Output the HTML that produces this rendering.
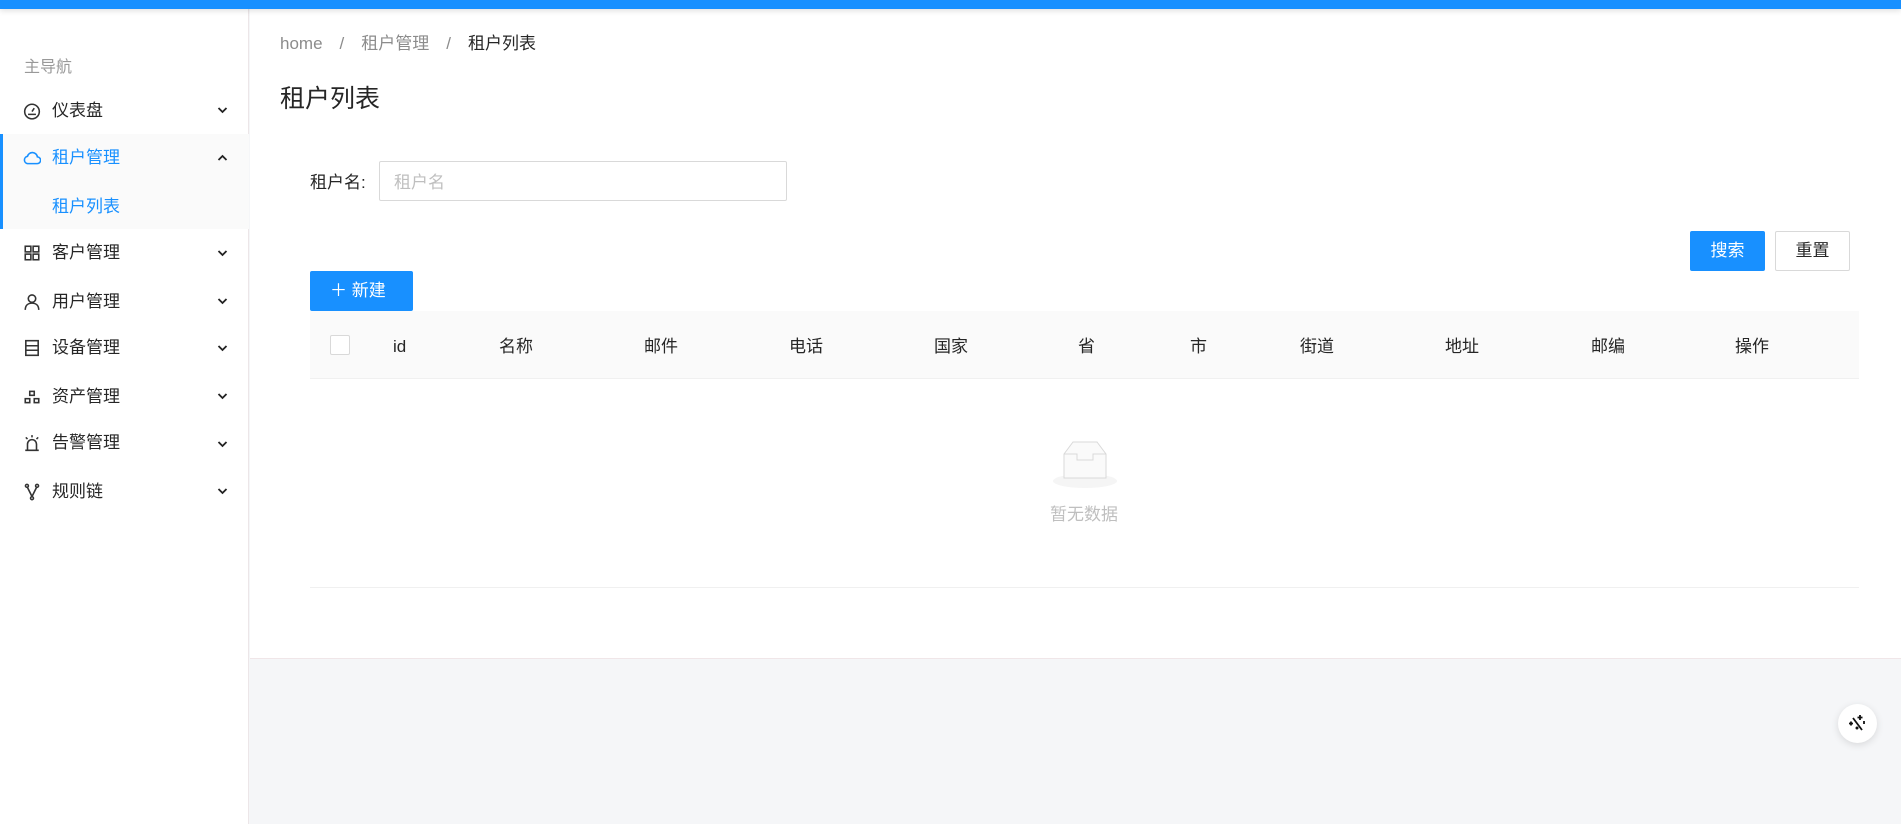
<!DOCTYPE html>
<html><head><meta charset="utf-8"><style>
*{margin:0;padding:0;box-sizing:border-box}
body{width:1901px;height:824px;overflow:hidden;background:#f5f6f8;font-family:"Liberation Sans","Noto Sans CJK SC",sans-serif;position:relative;color:#262626}
.a{position:absolute;white-space:nowrap}
.top{left:0;top:0;width:1901px;height:9px;background:#1890ff;box-shadow:0 2px 6px rgba(0,0,0,.12);z-index:5}
.side{left:0;top:9px;width:249px;height:815px;background:#fff;border-right:1px solid #ece6e8}
.main{left:250px;top:9px;width:1651px;height:650px;background:#fff;border-bottom:1px solid #f0e6e8}
.mi{font-size:17px;line-height:20px;left:52px}
.ic{left:23px;width:18px;height:18px}
.chev{left:217px;width:11px;height:8px}
.th{font-size:17px;top:332px;color:#262626}
</style></head><body>
<div class="a top"></div>
<div class="a side"></div>
<div class="a main"></div>
<div class="a" style="left:0;top:134px;width:249px;height:95px;background:#fafafa"></div>
<div class="a" style="left:0;top:134px;width:3px;height:95px;background:#1890ff"></div>
<div class="a" style="left:24px;top:53px;font-size:16px;color:#999">主导航</div>

<svg class="a ic" style="top:102px" viewBox="0 0 16 16" fill="none" stroke="#333" stroke-width="1.4"><circle cx="8" cy="8.5" r="6.5"/><path d="M8 8.5l2-3M4.5 11h7"/></svg>
<div class="a mi" style="top:101px">仪表盘</div>
<svg class="a ic" style="top:149px" viewBox="0 0 16 16" fill="none" stroke="#1890ff" stroke-width="1.4"><path d="M4 13h8.5a3 3 0 0 0 .3-6A4.5 4.5 0 0 0 4 6.5 3.3 3.3 0 0 0 4 13z"/></svg>
<div class="a mi" style="top:148px;color:#1890ff">租户管理</div>
<div class="a mi" style="top:197px;color:#1890ff">租户列表</div>
<svg class="a ic" style="top:244px" viewBox="0 0 16 16" fill="none" stroke="#333" stroke-width="1.4"><rect x="2" y="2" width="5" height="5"/><rect x="9" y="2" width="5" height="5"/><rect x="2" y="9" width="5" height="5"/><rect x="9" y="9" width="5" height="5"/></svg>
<div class="a mi" style="top:243px">客户管理</div>
<svg class="a ic" style="top:293px" viewBox="0 0 16 16" fill="none" stroke="#333" stroke-width="1.4"><circle cx="8" cy="5" r="3.3"/><path d="M2 15c0-4 2.5-6 6-6s6 2 6 6"/></svg>
<div class="a mi" style="top:292px">用户管理</div>
<svg class="a ic" style="top:339px" viewBox="0 0 16 16" fill="none" stroke="#333" stroke-width="1.4"><rect x="2.5" y="1.5" width="11" height="13"/><path d="M2.5 6h11M2.5 10h11"/></svg>
<div class="a mi" style="top:338px">设备管理</div>
<svg class="a ic" style="top:388px" viewBox="0 0 16 16" fill="none" stroke="#333" stroke-width="1.4"><rect x="6" y="3" width="4" height="3.5"/><rect x="2" y="9.5" width="4" height="3.5"/><rect x="10" y="9.5" width="4" height="3.5"/></svg>
<div class="a mi" style="top:387px">资产管理</div>
<svg class="a ic" style="top:434px" viewBox="0 0 16 16" fill="none" stroke="#333" stroke-width="1.4"><path d="M4 14V9a4 4 0 0 1 8 0v5M2 14.5h12M8 1v2M2.5 3l1.5 1.5M13.5 3L12 4.5"/></svg>
<div class="a mi" style="top:433px">告警管理</div>
<svg class="a ic" style="top:483px" viewBox="0 0 16 16" fill="none" stroke="#333" stroke-width="1.4"><circle cx="3.5" cy="2.5" r="1.3"/><circle cx="12.5" cy="2.5" r="1.3"/><circle cx="8" cy="13.5" r="1.3"/><path d="M4 4l4 8M12 4l-4 8"/></svg>
<div class="a mi" style="top:482px">规则链</div>
<svg class="a chev" style="top:106px" viewBox="0 0 11 8" fill="none" stroke="#222" stroke-width="1.8"><path d="M1.5 2l4 4 4-4"/></svg>
<svg class="a chev" style="top:154px" viewBox="0 0 11 8" fill="none" stroke="#222" stroke-width="1.8"><path d="M1.5 6l4-4 4 4"/></svg>
<svg class="a chev" style="top:249px" viewBox="0 0 11 8" fill="none" stroke="#222" stroke-width="1.8"><path d="M1.5 2l4 4 4-4"/></svg>
<svg class="a chev" style="top:297px" viewBox="0 0 11 8" fill="none" stroke="#222" stroke-width="1.8"><path d="M1.5 2l4 4 4-4"/></svg>
<svg class="a chev" style="top:344px" viewBox="0 0 11 8" fill="none" stroke="#222" stroke-width="1.8"><path d="M1.5 2l4 4 4-4"/></svg>
<svg class="a chev" style="top:392px" viewBox="0 0 11 8" fill="none" stroke="#222" stroke-width="1.8"><path d="M1.5 2l4 4 4-4"/></svg>
<svg class="a chev" style="top:440px" viewBox="0 0 11 8" fill="none" stroke="#222" stroke-width="1.8"><path d="M1.5 2l4 4 4-4"/></svg>
<svg class="a chev" style="top:487px" viewBox="0 0 11 8" fill="none" stroke="#222" stroke-width="1.8"><path d="M1.5 2l4 4 4-4"/></svg>

<div class="a" style="left:280px;top:29px;font-size:17px;color:#8c8c8c">home<span style="margin:0 17px">/</span>租户管理<span style="margin:0 17px">/</span><span style="color:#262626">租户列表</span></div>
<div class="a" style="left:280px;top:79px;font-size:25px;color:#262626">租户列表</div>

<div class="a" style="left:310px;top:168px;font-size:17px">租户名:</div>
<div class="a" style="left:379px;top:161px;width:408px;height:40px;border:1px solid #d9d9d9;border-radius:2px"></div>
<div class="a" style="left:394px;top:168px;font-size:17px;color:#bfbfbf">租户名</div>
<div class="a" style="left:1690px;top:231px;width:75px;height:40px;background:#1890ff;border-radius:2px;color:#fff;font-size:17px;text-align:center;line-height:40px">搜索</div>
<div class="a" style="left:1775px;top:231px;width:75px;height:40px;border:1px solid #d9d9d9;border-radius:2px;font-size:17px;text-align:center;line-height:38px">重置</div>
<div class="a" style="left:310px;top:271px;width:103px;height:40px;background:#1890ff;border-radius:2px;color:#fff;font-size:17px;line-height:40px;padding-left:20px">＋&nbsp;新建</div>

<div class="a" style="left:310px;top:311px;width:1549px;height:68px;background:#fafafa;border-bottom:1px solid #f0f0f0"></div>
<div class="a" style="left:330px;top:335px;width:20px;height:20px;border:1px solid #d9d9d9;border-radius:2px;background:#fff"></div>
<div class="a th" style="left:393px;top:337px">id</div>
<div class="a th" style="left:499px">名称</div>
<div class="a th" style="left:644px">邮件</div>
<div class="a th" style="left:789px">电话</div>
<div class="a th" style="left:934px">国家</div>
<div class="a th" style="left:1078px">省</div>
<div class="a th" style="left:1190px">市</div>
<div class="a th" style="left:1300px">街道</div>
<div class="a th" style="left:1445px">地址</div>
<div class="a th" style="left:1591px">邮编</div>
<div class="a th" style="left:1735px">操作</div>
<svg class="a" style="left:1045px;top:436px" width="80" height="54" viewBox="0 0 80 54"><ellipse cx="40" cy="45" rx="32" ry="7" fill="#f5f5f5"/><path d="M19 18l9-12h24l9 12v24H19z" fill="#fafafa" stroke="#d9d9d9"/><path d="M19 18h13v6h16v-6h13" fill="none" stroke="#d9d9d9"/></svg>
<div class="a" style="left:1050px;top:500px;font-size:17px;color:#bfbfbf">暂无数据</div>
<div class="a" style="left:310px;top:587px;width:1549px;height:1px;background:#f0f0f0"></div>

<div class="a" style="left:1838px;top:704px;width:39px;height:39px;border-radius:50%;background:#fff;box-shadow:0 2px 8px rgba(0,0,0,.12)"></div>
<svg class="a" style="left:1846px;top:712px" width="23" height="23" viewBox="0 0 23 23" fill="none" stroke="#111" stroke-width="1.8"><path d="M7 6l9 12"/><path d="M14 3v5M11.5 5.5h5M18 9v3M3 11.5h4M5 9.5v4"/><circle cx="11" cy="16" r=".6" fill="#111"/></svg>
</body></html>
